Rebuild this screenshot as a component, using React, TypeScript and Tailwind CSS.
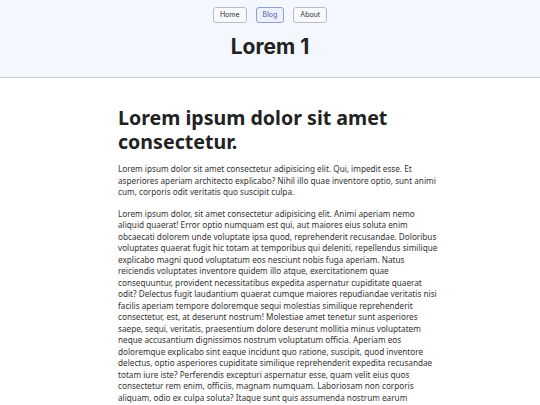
const p1 =
  "Lorem ipsum dolor sit amet consectetur adipisicing elit. Qui, impedit esse. Et asperiores aperiam architecto explicabo? Nihil illo quae inventore optio, sunt animi cum, corporis odit veritatis quo suscipit culpa.";

const p2 =
  "Lorem ipsum dolor, sit amet consectetur adipisicing elit. Animi aperiam nemo aliquid quaerat! Error optio numquam est qui, aut maiores eius soluta enim obcaecati dolorem unde voluptate ipsa quod, reprehenderit recusandae. Doloribus voluptates quaerat fugit hic totam at temporibus qui deleniti, repellendus similique explicabo magni quod voluptatum eos nesciunt nobis fuga aperiam. Natus reiciendis voluptates inventore quidem illo atque, exercitationem quae consequuntur, provident necessitatibus expedita aspernatur cupiditate quaerat odit? Delectus fugit laudantium quaerat cumque maiores repudiandae veritatis nisi facilis aperiam tempore doloremque sequi molestias similique reprehenderit consectetur, est, at deserunt nostrum! Molestiae amet tenetur sunt asperiores saepe, sequi, veritatis, praesentium dolore deserunt mollitia minus voluptatem neque accusantium dignissimos nostrum voluptatum officia. Aperiam eos doloremque explicabo sint eaque incidunt quo ratione, suscipit, quod inventore delectus, optio asperiores cupiditate similique reprehenderit expedita recusandae totam iure iste? Perferendis excepturi aspernatur esse, quam velit eius quos consectetur rem enim, officiis, magnam numquam. Laboriosam non corporis aliquam, odio ex culpa soluta? Itaque sunt quis assumenda nostrum earum";

const navItems = [
  { label: "Home", active: false },
  { label: "Blog", active: true },
  { label: "About", active: false },
];

const Header = () => (
  <header className="h-[78px] bg-[#f5f7fe] border-b border-[#c9cbd6] flex flex-col items-center">
    <nav className="flex gap-[9px] pt-[7px]">
      {navItems.map(({ label, active }) => (
        <a
          key={label}
          href="#"
          className={
            active
              ? "h-[16px] px-[6px] flex items-center rounded-[3px] border border-[#8f9fd0] bg-[#eef1fc] text-[7px] text-[#4a5fa8] font-['Inter',sans-serif]"
              : "h-[16px] px-[6px] flex items-center rounded-[3px] border border-[#b9bcc6] bg-[#f8f9fc] text-[7px] text-[#333] font-['Inter',sans-serif]"
          }
        >
          {label}
        </a>
      ))}
    </nav>
    <h1 className="mt-[10px] text-[21px] leading-[28px] font-bold text-[#222] font-['Inter',sans-serif]">
      Lorem 1
    </h1>
  </header>
);

export default function App() {
  return (
    <div className="h-[405px] overflow-hidden bg-white font-['Noto_Sans',sans-serif] text-[#333]">
      <Header />
      <main className="ml-[118px] w-[321px] pt-[28px]">
        <h2 className="text-[19.6px] leading-[24px] font-bold text-[#222]">
          Lorem ipsum dolor sit amet consectetur.
        </h2>
        <p className="mt-[9px] text-[8.2px] leading-[11.5px]">{p1}</p>
        <p className="mt-[10px] text-[8.2px] leading-[11.5px]">{p2}</p>
      </main>
    </div>
  );
}
